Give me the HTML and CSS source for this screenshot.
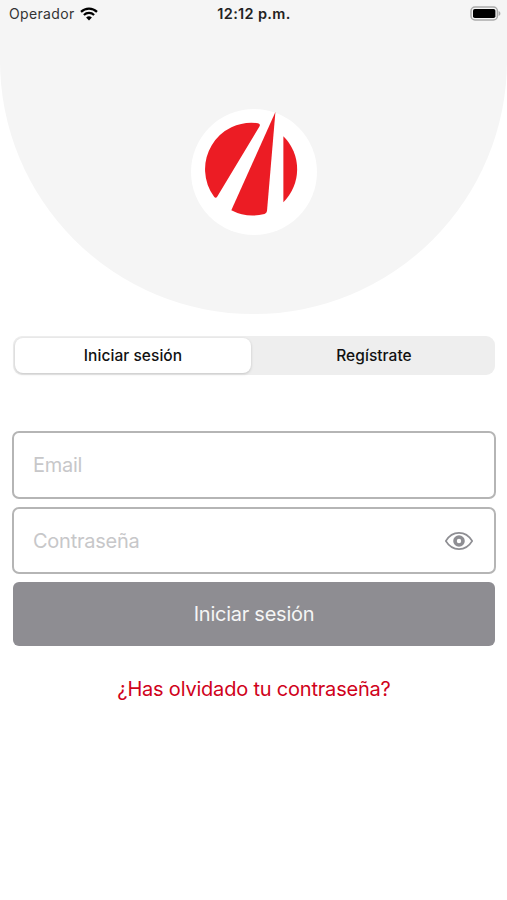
FILE: index.html
```html
<!DOCTYPE html>
<html lang="es">
<head>
    <meta charset="UTF-8">
    <meta name="viewport" content="width=device-width, initial-scale=1.0">
    <title>Iniciar sesión</title>
    <link rel="stylesheet" href="styles.css">
</head>
<body>
    <header class="hero">
        <div class="status-bar">
            <div class="carrier">
                <span>Operador</span>
                <svg class="wifi" viewBox="0 0 18 14" aria-hidden="true">
                    <path d="M1 4.9a11.6 11.6 0 0 1 16 0" />
                    <path d="M3.9 8a7.4 7.4 0 0 1 10.2 0" />
                    <path class="wifi-dot" d="M9 13.6 6.1 10.6a4.2 4.2 0 0 1 5.8 0z" />
                </svg>
            </div>
            <span class="clock">12:12 p.m.</span>
            <svg class="battery" viewBox="0 0 31 15" aria-hidden="true">
                <rect class="battery-case" x="1" y="1" width="26.4" height="13" rx="4" />
                <rect class="battery-level" x="3" y="3" width="22.4" height="9" rx="1.8" />
                <path class="battery-tip" d="M28.6 5v5c2.4-1 2.4-4 0-5z" />
            </svg>
        </div>
        <div class="logo">
            <svg viewBox="0 0 126 126" aria-hidden="true">
                <path d="M67 14.2Q70 14.8 68.3 17.8L26.3 87.5Q24.8 89.9 23.1 87.8A46.5 46.5 0 0 1 67 14.2z" />
                <path d="M84.4 3 76 102Q75.8 104.1 73.5 105A46.5 46.5 0 0 1 40.3 101.3z" />
                <path d="M92.4 27.2A46.5 46.5 0 0 1 92.4 93.2z" />
            </svg>
        </div>
    </header>

    <main>
        <nav class="tabs">
            <button type="button" class="tab tab-active">Iniciar sesión</button>
            <button type="button" class="tab">Regístrate</button>
        </nav>

        <form class="login">
            <label class="field">
                <input type="email" placeholder="Email" aria-label="Email">
            </label>
            <label class="field">
                <input type="password" placeholder="Contraseña" aria-label="Contraseña">
                <svg class="eye" viewBox="0 0 28 18" aria-hidden="true">
                    <path d="M.8 9C7.4-1.8 20.6-1.8 27.2 9 20.6 19.8 7.4 19.8.8 9z" />
                    <circle cx="14" cy="9" r="4" />
                </svg>
            </label>
            <button type="button" class="submit">Iniciar sesión</button>
        </form>

        <a class="forgot" href="#">¿Has olvidado tu contraseña?</a>
    </main>
</body>
</html>
```
FILE: styles.css
```css
*,
*::after,
*::before{
    box-sizing: border-box;
}

body{
    margin: 0;
    min-height: 100vh;
    background-color: #fff;
    font-family: Inter, "Liberation Sans", sans-serif;
    overflow-x: hidden;
}

button,
input{
    font-family: inherit;
    border: none;
    padding: 0;
}

/* Header */
.hero{
    height: 314px;
    background-color: #f5f5f5;
    border-radius: 0 0 254px 254px;
}

.status-bar{
    display: grid;
    grid-template-columns: 1fr auto 1fr;
    align-items: center;
    height: 27px;
    padding: 0 6px 0 9px;
    font-size: 14px;
    color: #333;
}
.carrier{
    display: flex;
    align-items: center;
    gap: 5px;
    letter-spacing: .35px;
}
.wifi{
    width: 18px;
    height: 14px;
    fill: none;
    stroke: #000;
    stroke-width: 2.2;
}
.wifi-dot{
    fill: #000;
    stroke: none;
}
.clock{
    margin-right: 2px;
    font-size: 14.5px;
    font-weight: 600;
    letter-spacing: .35px;
    color: #222;
}
.battery{
    width: 31px;
    height: 15px;
    justify-self: end;
}
.battery-case{
    fill: #f5f5f5;
    stroke: #aaa;
    stroke-width: 1.5;
}
.battery-tip{
    fill: #aaa;
}

.logo{
    width: 126px;
    height: 126px;
    margin: 82px auto 0;
    border-radius: 50%;
    background-color: #fff;
}
.logo svg{
    display: block;
    fill: #ec1c24;
}

/* Tabs */
main{
    padding: 22px 11px 0 12px;
}
.tabs{
    display: grid;
    grid-template-columns: 236px 1fr;
    column-gap: 4px;
    height: 39px;
    margin: 0 1px;
    padding: 2px;
    border-radius: 9px;
    background-color: #eee;
}
.tab{
    border-radius: 8px;
    background: none;
    font-size: 15.5px;
    font-weight: 500;
    letter-spacing: .05px;
    color: #111;
}
.tab-active{
    background-color: #fff;
    box-shadow: 0 1px 3px rgba(0, 0, 0, .18);
}

/* Form */
.login{
    display: grid;
    gap: 8px;
    margin-top: 56px;
}
.field{
    display: flex;
    align-items: center;
    height: 68px;
    padding: 0 21px 0 19px;
    border: 2px solid #b5b5b5;
    border-radius: 7px;
}
.field + .field{
    height: 67px;
}
.field input{
    flex: 1;
    min-width: 0;
    outline: none;
    background: none;
    font-size: 20px;
    letter-spacing: -.25px;
    color: #333;
}
.field input::placeholder{
    color: #c7c7c9;
}
.eye{
    width: 28px;
    height: 18px;
    fill: none;
    stroke: #8e8e93;
    stroke-width: 1.6;
}
.eye circle{
    stroke-width: 3.6;
}
.submit{
    height: 64px;
    margin: 0 1px;
    border-radius: 6px;
    background-color: #8e8d92;
    font-size: 20px;
    letter-spacing: -.25px;
    color: #f5f5f5;
}
.forgot{
    display: block;
    margin-top: 31px;
    font-size: 20px;
    line-height: 24px;
    letter-spacing: -.2px;
    text-align: center;
    text-decoration: none;
    color: #d0021b;
}
```
